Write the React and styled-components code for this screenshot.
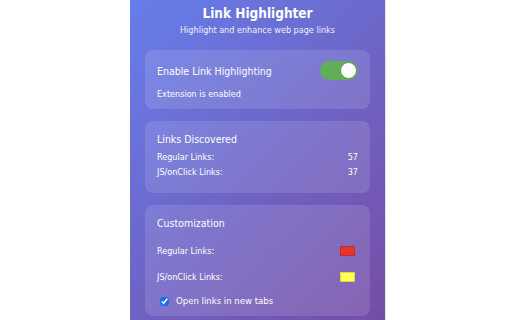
import styled, { createGlobalStyle } from "styled-components";

const GlobalStyle = createGlobalStyle`
  html, body {
    margin: 0;
    padding: 0;
    background: #ffffff;
    height: 100%;
    overflow: hidden;
  }
  body {
    font-family: "DejaVu Sans Condensed", "Liberation Sans", sans-serif;
  }
`;

const Page = styled.div`
  display: flex;
  padding-left: 130px;
  height: 320px;
`;

const Panel = styled.div`
  width: 256px;
  min-height: 340px;
  box-sizing: border-box;
  padding: 4px 15px 0;
  color: #ffffff;
  background: linear-gradient(135deg, #667eea 0%, #764ba2 100%);
  border-right: 1px solid #e4e4e8;
  display: flex;
  flex-direction: column;
`;

const Header = styled.header`
  display: flex;
  flex-direction: column;
  align-items: center;
  margin-bottom: 12px;
`;

const Title = styled.h1`
  margin: 0;
  font-size: 13.5px;
  font-weight: 700;
  line-height: 19px;
`;

const Subtitle = styled.p`
  margin: 0;
  font-size: 9px;
  line-height: 15px;
  opacity: 0.9;
`;

const Cards = styled.div`
  display: flex;
  flex-direction: column;
  gap: 12px;
`;

const Card = styled.section`
  background: rgba(255, 255, 255, 0.12);
  border-radius: 8px;
  padding: ${(p) => p.$pad || "12px"};
  display: flex;
  flex-direction: column;
`;

const Row = styled.div`
  display: flex;
  align-items: center;
  justify-content: space-between;
  height: ${(p) => p.$h || "auto"};
`;

const CardTitle = styled.h2`
  margin: 0;
  font-size: 10.5px;
  font-weight: 400;
  line-height: 16px;
`;

const Small = styled.span`
  font-size: 9px;
  line-height: 15px;
`;

const Status = styled.p`
  margin: 7px 0 0;
  font-size: 9px;
  line-height: 14px;
`;

const Track = styled.div`
  width: 38px;
  height: 19px;
  border-radius: 10px;
  background: #62ad58;
  display: flex;
  align-items: center;
  justify-content: flex-end;
  padding: 0 1px;
  box-sizing: border-box;
`;

const Knob = styled.div`
  width: 17px;
  height: 17px;
  border-radius: 50%;
  background: #ffffff;
  border: 1px solid #4d9a44;
  box-sizing: border-box;
`;

const Swatch = styled.div`
  width: 15px;
  height: 10px;
  margin-right: 3px;
  background: ${(p) => p.$color};
  border: 1px solid rgba(0, 0, 0, 0.15);
  box-sizing: border-box;
`;

const CheckRow = styled.label`
  display: flex;
  align-items: center;
  gap: 7px;
  padding-left: 3px;
  margin-top: 4px;
  font-size: 9.5px;
  line-height: 14px;
`;

const Check = styled.input`
  margin: 0;
  width: 9px;
  height: 9px;
  accent-color: #1f6fe5;
`;

export default function App() {
  return (
    <>
      <GlobalStyle />
      <Page>
        <Panel>
          <Header>
            <Title>Link Highlighter</Title>
            <Subtitle>Highlight and enhance web page links</Subtitle>
          </Header>
          <Cards>
            <Card $pad="11px 12px 8px">
              <Row>
                <CardTitle>Enable Link Highlighting</CardTitle>
                <Track>
                  <Knob />
                </Track>
              </Row>
              <Status>Extension is enabled</Status>
            </Card>

            <Card $pad="10px 12px 13px">
              <CardTitle>Links Discovered</CardTitle>
              <Row style={{ marginTop: 3 }}>
                <Small>Regular Links:</Small>
                <Small>57</Small>
              </Row>
              <Row>
                <Small>JS/onClick Links:</Small>
                <Small>37</Small>
              </Row>
            </Card>

            <Card $pad="10px 12px 8px">
              <CardTitle>Customization</CardTitle>
              <Row $h="26px" style={{ marginTop: 7 }}>
                <Small>Regular Links:</Small>
                <Swatch $color="#e5342a" />
              </Row>
              <Row $h="26px">
                <Small>JS/onClick Links:</Small>
                <Swatch $color="#ffff55" />
              </Row>
              <CheckRow>
                <Check type="checkbox" defaultChecked />
                Open links in new tabs
              </CheckRow>
            </Card>
          </Cards>
        </Panel>
      </Page>
    </>
  );
}
